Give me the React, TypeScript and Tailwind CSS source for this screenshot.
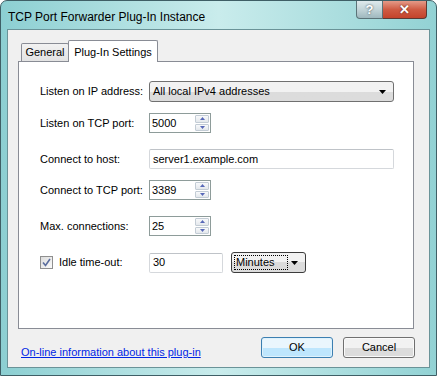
import React from "react";

const font = { fontFamily: '"Liberation Sans", Arial, sans-serif' };

function SpinBox({ value }: { value: string }) {
  return (
    <div className="flex h-[20px] w-[62px] items-stretch border border-[#8e9c9a] bg-white">
      <div className="flex flex-1 items-center pl-[2px] text-[11px] text-black">{value}</div>
      <div className="my-[1px] mr-[1px] flex w-[14px] flex-col gap-[1px]">
        <div className="flex flex-1 items-center justify-center rounded-[1px] border border-[#c3ccd5] bg-gradient-to-b from-[#f8f9fb] to-[#e4e8ec]">
          <svg width="5" height="3" viewBox="0 0 5 3">
            <path d="M2.5 0 L5 3 L0 3 Z" fill="#5868b8" />
          </svg>
        </div>
        <div className="flex flex-1 items-center justify-center rounded-[1px] border border-[#c3ccd5] bg-gradient-to-b from-[#f8f9fb] to-[#e4e8ec]">
          <svg width="5" height="3" viewBox="0 0 5 3">
            <path d="M0 0 L5 0 L2.5 3 Z" fill="#5868b8" />
          </svg>
        </div>
      </div>
    </div>
  );
}

function Arrow() {
  return (
    <svg width="7" height="4" viewBox="0 0 7 4">
      <path d="M0 0 L7 0 L3.5 4 Z" fill="#000" />
    </svg>
  );
}

function Row({ label, children, className }: { label: React.ReactNode; children: React.ReactNode; className: string }) {
  return (
    <div className={`flex items-center ${className}`}>
      <div className="w-[109px] text-[11px] text-black">{label}</div>
      {children}
    </div>
  );
}

export default function App() {
  return (
    <div style={font} className="h-[376px] w-[437px] overflow-hidden bg-white">
      <div className="flex h-[376px] w-[437px] flex-col rounded-t-[7px] border border-[#3f5f66] bg-gradient-to-r from-[#8ccfd2] via-[#c9ecec] to-[#92d2d4]">
        {/* Title bar */}
        <div className="flex h-[28px] items-start">
          <div className="pl-[7px] pt-[7px] text-[12px] text-black">TCP Port Forwarder Plug-In Instance</div>
          <div className="ml-auto mr-[9px] flex">
            <div className="flex h-[18px] w-[27px] items-center justify-center rounded-bl-[4px] border border-t-0 border-[#5b7378] bg-gradient-to-b from-[#dfe9ec] via-[#c2d4d8] to-[#9fb8be] text-[13px] font-bold text-white [text-shadow:0_0_2px_#2c3e44]">
              ?
            </div>
            <div className="flex h-[18px] w-[44px] items-center justify-center rounded-br-[4px] border border-l-0 border-t-0 border-[#5b3a34] bg-gradient-to-b from-[#e49a88] via-[#cf5b43] to-[#c4432b] text-[13px] font-bold text-white [text-shadow:0_0_2px_#4a1a10]">
              ✕
            </div>
          </div>
        </div>

        {/* Client area */}
        <div className="mx-[6px] flex h-[339px] flex-col border border-[#6a9398] bg-[#f0f0f0]">
          {/* Tabs */}
          <div className="ml-[13px] mt-[10px] flex h-[21px] items-end">
            <div className="-mr-[1px] flex h-[18px] w-[48px] items-center justify-center rounded-t-[2px] border border-b-0 border-[#898c95] bg-gradient-to-b from-[#f2f2f2] to-[#e3e3e3] text-[11px] text-black">
              General
            </div>
            <div className="relative z-10 -mb-[1px] flex h-[22px] w-[90px] items-start justify-center rounded-t-[2px] border border-b-0 border-[#898c95] bg-white pt-[3px] text-[11px] text-black">
              Plug-In Settings
            </div>
          </div>

          {/* Panel */}
          <div className="ml-[10px] flex h-[268px] w-[396px] flex-col border border-[#898c95] bg-white pl-[21px]">
            <Row label="Listen on IP address:" className="mt-[19px]">
              <div className="flex h-[21px] w-[245px] items-center rounded-[3px] border border-[#707070] bg-gradient-to-b from-[#f2f2f2] from-50% to-[#dcdcdc] to-50% pl-[3px] pr-[7px] text-[11px] text-black">
                <span className="flex-1">All local IPv4 addresses</span>
                <Arrow />
              </div>
            </Row>
            <Row label="Listen on TCP port:" className="mt-[11px]">
              <SpinBox value="5000" />
            </Row>
            <Row label="Connect to host:" className="mt-[16px]">
              <div className="flex h-[20px] w-[245px] items-center rounded-[2px] border border-[#d5d8dc] border-t-[#bfc3c8] bg-white pl-[3px] text-[11px] text-black">
                server1.example.com
              </div>
            </Row>
            <Row label="Connect to TCP port:" className="mt-[11px]">
              <SpinBox value="3389" />
            </Row>
            <Row label="Max. connections:" className="mt-[16px]">
              <SpinBox value="25" />
            </Row>
            <Row
              className="mt-[16px]"
              label={
                <div className="flex items-center">
                  <div className="flex h-[13px] w-[13px] items-center justify-center border border-[#8f8f8f] bg-gradient-to-br from-[#dcdcdc] to-[#fbfbfb]">
                    <svg width="9" height="9" viewBox="0 0 9 9">
                      <path d="M1 4.5 L3.5 7.5 L8 1" fill="none" stroke="#5a6d9e" strokeWidth="1.6" />
                    </svg>
                  </div>
                  <span className="ml-[6px]">Idle time-out:</span>
                </div>
              }
            >
              <div className="flex h-[20px] w-[74px] items-center rounded-[2px] border border-[#d5d8dc] border-t-[#bfc3c8] bg-white pl-[3px] text-[11px] text-black">
                30
              </div>
              <div className="ml-[8px] flex h-[21px] w-[75px] items-center rounded-[3px] border border-[#3c3c3c] bg-gradient-to-b from-[#f2f2f2] from-50% to-[#dcdcdc] to-50% pl-[2px] pr-[7px] text-[11px] text-black">
                <span className="flex h-[15px] w-[54px] items-center border border-dotted border-black pl-[1px]">Minutes</span>
                <span className="ml-auto">
                  <Arrow />
                </span>
              </div>
            </Row>
          </div>

          {/* Footer */}
          <div className="mt-[8px] flex items-start pl-[13px]">
            <a href="#" className="mt-[7px] text-[11px] text-[#0026e5] underline">
              On-line information about this plug-in
            </a>
            <div className="ml-auto mr-[14px] flex gap-[10px]">
              <button className="h-[21px] w-[72px] rounded-[3px] border border-[#3c7fb1] bg-gradient-to-b from-[#eaf6fd] from-50% to-[#bee6fd] to-50% text-[11px] text-black shadow-[inset_0_0_0_1px_#dff2fc]">
                OK
              </button>
              <button className="h-[21px] w-[72px] rounded-[3px] border border-[#707070] bg-gradient-to-b from-[#f2f2f2] from-50% to-[#dcdcdc] to-50% text-[11px] text-black shadow-[inset_0_0_0_1px_#fafafa]">
                Cancel
              </button>
            </div>
          </div>
        </div>
      </div>
    </div>
  );
}
